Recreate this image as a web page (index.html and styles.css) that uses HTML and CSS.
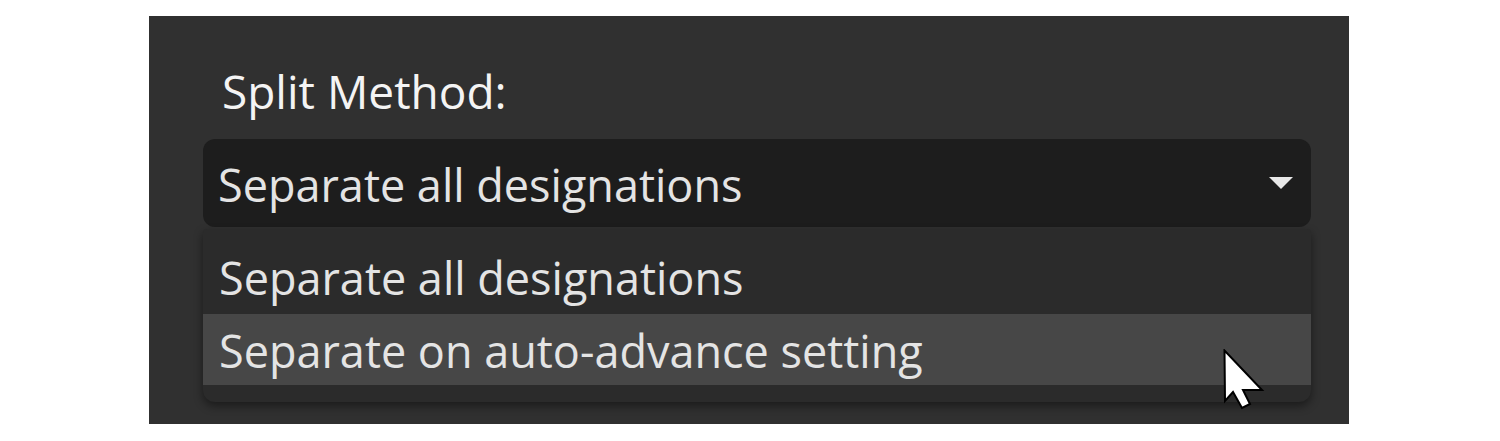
FILE: index.html
```html
<!DOCTYPE html>
<html>
<head>
<meta charset="utf-8">
<link rel="stylesheet" href="styles.css">
</head>
<body>
<div class="panel">
  <div class="label">Split Method:</div>
  <div class="field">
    <div class="select">
      <span class="value">Separate all designations</span>
      <svg class="caret" width="24" height="12" viewBox="0 0 24 12"><polygon points="0,0 24,0 12,12" fill="#e8e8e8"/></svg>
    </div>
    <div class="menu">
      <div class="item item-first">Separate all designations</div>
      <div class="item item-hover">Separate on auto-advance setting</div>
    </div>
    <svg class="cursor" width="44" height="62" viewBox="0 0 44 62"><polygon points="1.5,1.5 2,52 10,43 19,59 27,55 20,41 39,41" fill="#ffffff" stroke="#000000" stroke-width="2" stroke-linejoin="miter"/></svg>
  </div>
</div>
</body>
</html>
```
FILE: styles.css
```css
html, body {
  margin: 0;
  padding: 0;
  background: #ffffff;
}
body {
  padding: 16px 0 0 149px;
  font-family: "Open Sans", "Noto Sans", sans-serif;
}
.panel {
  width: 1200px;
  height: 408px;
  box-sizing: border-box;
  background: #303030;
  padding: 45px 38px 0 54px;
}
.label {
  color: #f4f4f4;
  font-size: 46px;
  line-height: 60px;
  padding-left: 19px;
  height: 60px;
  margin-bottom: 18px;
}
.field {
  position: relative;
}
.select {
  height: 88px;
  box-sizing: border-box;
  background: #1d1d1d;
  border-radius: 12px;
  display: flex;
  align-items: center;
  justify-content: space-between;
  padding: 4px 18px 0 15px;
  color: #e4e4e4;
  font-size: 45px;
}
.value {
  line-height: 84px;
}
.caret {
  display: block;
  margin-top: -4px;
}
.menu {
  margin-top: 2px;
  background: #2b2b2b;
  border-radius: 4px 4px 12px 12px;
  padding-bottom: 17px;
  box-shadow: 0 4px 10px rgba(0, 0, 0, 0.45);
  color: #e4e4e4;
  font-size: 45px;
}
.item {
  padding-left: 16px;
}
.item-first {
  padding-top: 13px;
  line-height: 72px;
}
.item-hover {
  background: #474747;
  padding-top: 3px;
  line-height: 68px;
}
.cursor {
  position: absolute;
  left: 1020px;
  top: 210px;
}
```
